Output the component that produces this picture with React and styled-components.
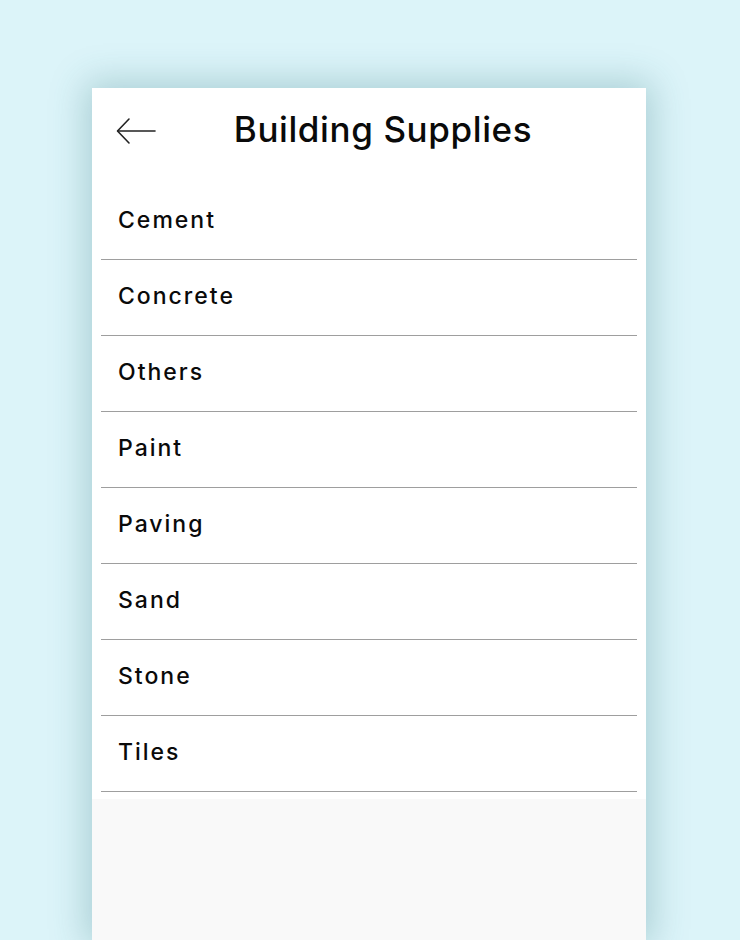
import React from 'react'
import styled, { createGlobalStyle } from 'styled-components'

const Global = createGlobalStyle`
  html, body {
    margin: 0;
    padding: 0;
    background: #dcf4f9;
    font-family: "Inter", "Noto Sans", sans-serif;
  }
`

const items = ['Cement', 'Concrete', 'Others', 'Paint', 'Paving', 'Sand', 'Stone', 'Tiles']

const Page = styled.div`
  height: 940px;
  overflow: hidden;
  padding: 88px 0 0 92px;
  box-sizing: border-box;
`

const Card = styled.div`
  width: 554px;
  height: 852px;
  background: #f9f9f9;
  box-shadow: 0 0 34px 6px rgba(40, 110, 120, 0.28);
  display: flex;
  flex-direction: column;
`

const Sheet = styled.div`
  background: #fff;
  padding: 0 9px 7px;
`

const Header = styled.header`
  height: 96px;
  padding-bottom: 14px;
  box-sizing: border-box;
  display: grid;
  grid-template-columns: 56px 1fr 56px;
  align-items: center;
`

const Back = styled.button`
  border: none;
  background: none;
  padding: 0;
  margin: 3px 0 0 15px;
  width: 40px;
  height: 28px;
  display: flex;
  align-items: center;
  cursor: pointer;
`

const Title = styled.h1`
  margin: 0;
  text-align: center;
  font-size: 35px;
  font-weight: 500;
  color: #0a0a0a;
  letter-spacing: 0.6px;
  padding-left: 28px;
`

const List = styled.ul`
  list-style: none;
  margin: 0;
  padding: 0;
`

const Row = styled.li`
  height: 76px;
  display: flex;
  align-items: center;
  padding-left: 17px;
  padding-bottom: 4px;
  box-sizing: border-box;
  border-bottom: 1.5px solid #9e9e9e;
  font-size: 23px;
  font-weight: 500;
  color: #0a0a0a;
  letter-spacing: 2px;
`

export default function App() {
  return (
    <>
      <Global />
      <Page>
        <Card>
          <Sheet>
            <Header>
              <Back aria-label="Back">
                <svg width="40" height="28" viewBox="0 0 40 28" fill="none" stroke="#222" strokeWidth="1.6" strokeLinecap="round" strokeLinejoin="round">
                  <path d="M39 14H2" />
                  <path d="M13 2L1.5 14L13 26" />
                </svg>
              </Back>
              <Title>Building Supplies</Title>
              <span />
            </Header>
            <List>
              {items.map((it) => (
                <Row key={it}>{it}</Row>
              ))}
            </List>
          </Sheet>
        </Card>
      </Page>
    </>
  )
}
